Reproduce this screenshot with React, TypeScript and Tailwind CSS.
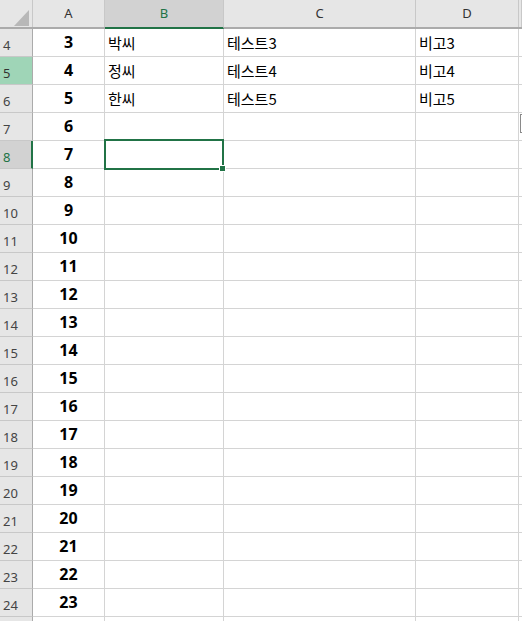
import React from "react";

const cols = [
  { key: "A", w: "w-[72px]" },
  { key: "B", w: "w-[119px]" },
  { key: "C", w: "w-[192px]" },
  { key: "D", w: "w-[103px]" },
  { key: "", w: "flex-1" },
];

const data: Record<number, string[]> = {
  4: ["3", "박씨", "테스트3", "비고3"],
  5: ["4", "정씨", "테스트4", "비고4"],
  6: ["5", "한씨", "테스트5", "비고5"],
};

const rows = Array.from({ length: 22 }, (_, i) => i + 4);

const font = "font-['Noto_Sans','Noto_Sans_CJK_KR',sans-serif]";

const RowHeader = ({ n }: { n: number }) => {
  let cls = "bg-[#e6e6e6] text-[#444] border-r border-[#ababab]";
  if (n === 5) cls = "bg-[#9fd5b7] text-[#333] border-r border-[#ababab]";
  if (n === 8) cls = "bg-[#d2d2d2] text-[#217346] border-r-2 border-[#217346]";
  return (
    <div
      className={`w-[33px] shrink-0 h-full flex items-end pl-[3px] pb-[1px] text-[13px] border-b border-b-[#c8c8c8] ${cls}`}
    >
      {n <= 24 ? n : ""}
    </div>
  );
};

export default function App() {
  return (
    <div className={`relative w-[522px] h-[621px] overflow-hidden bg-white ${font}`}>
      {/* column headers */}
      <div className="flex h-[29px] bg-[#e6e6e6] border-b-2 border-[#ababab]">
        <div className="w-[33px] shrink-0 relative border-r border-[#c8c8c8]">
          <svg className="absolute left-[14px] top-[10px]" width="15" height="16" viewBox="0 0 15 16">
            <polygon points="15,0 15,16 0,16" fill="#b8b8b8" />
          </svg>
        </div>
        {cols.map((c, i) => (
          <div
            key={i}
            className={`${c.w} shrink-0 flex items-center justify-center text-[13px] border-r border-[#c8c8c8] ${
              c.key === "B"
                ? "bg-[#d2d2d2] text-[#217346] border-b-2 border-b-[#217346] -mb-[2px]"
                : "text-[#333]"
            }`}
          >
            {c.key}
          </div>
        ))}
      </div>

      {rows.map((n) => {
        const d = data[n];
        return (
          <div key={n} className="flex h-[28px]">
            <RowHeader n={n} />
            <div className="w-[72px] shrink-0 flex items-end justify-center pb-[2px] font-bold text-[16px] text-black border-r border-b border-[#d4d4d4]">
              {n <= 24 ? n - 1 : ""}
            </div>
            {cols.slice(1).map((c, i) => (
              <div
                key={i}
                className={`${c.w} shrink-0 flex items-end pl-[3px] pb-[2px] text-[15px] text-black border-r border-b border-[#d4d4d4] font-['Noto_Sans_CJK_KR',sans-serif]`}
              >
                {d ? d[i + 1] ?? "" : ""}
              </div>
            ))}
          </div>
        );
      })}

      {/* active cell B8 */}
      <div className="absolute left-[104px] top-[139px] w-[120px] h-[31px] border-2 border-[#217346]" />
      <div className="absolute left-[219px] top-[165px] w-[7px] h-[7px] bg-[#217346] border border-white" />

      {/* small marker at right edge */}
      <div className="absolute left-[520px] top-[114px] w-[6px] h-[19px] border border-[#8a8a8a] bg-white" />
    </div>
  );
}
